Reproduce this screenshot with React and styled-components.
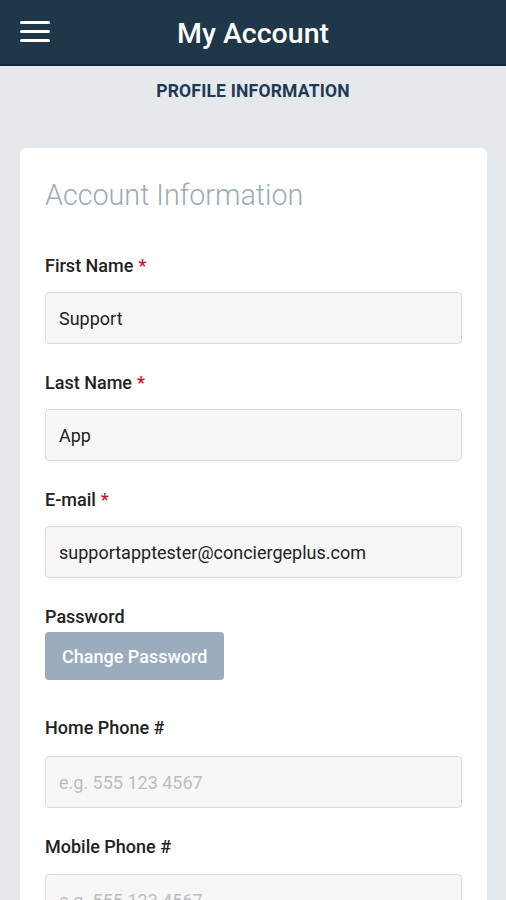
import React from "react";
import styled, { createGlobalStyle } from "styled-components";

const GlobalStyle = createGlobalStyle`
  * { box-sizing: border-box; }
  body {
    margin: 0;
    background: #e6e9ec;
    font-family: Roboto, "Noto Sans", Arial, sans-serif;
  }
`;

const Page = styled.div`
  min-height: 900px;
  background: #e6e9ec;
`;

const Header = styled.header`
  height: 66px;
  background: #1e3749;
  border-bottom: 2px solid #16293a;
  display: flex;
  align-items: center;
  position: relative;
  justify-content: center;
`;

const MenuButton = styled.button`
  position: absolute;
  left: 20px;
  top: 21px;
  width: 30px;
  height: 21px;
  padding: 0;
  border: none;
  background: none;
  display: flex;
  flex-direction: column;
  justify-content: space-between;
  span {
    display: block;
    height: 3px;
    border-radius: 2px;
    background: #fff;
  }
`;

const Title = styled.h1`
  margin: 0;
  color: #fff;
  font-size: 28.5px;
  font-weight: 500;
  padding-top: 2px;
`;

const SectionTitle = styled.div`
  text-align: center;
  color: #1e3a55;
  font-size: 17.5px;
  font-weight: 700;
  letter-spacing: 0.2px;
  padding-top: 14px;
  line-height: 22px;
`;

const Card = styled.div`
  margin: 46px 19px 0 20px;
  background: #fff;
  border-radius: 6px;
  padding: 30px 25px 0 25px;
`;

const CardTitle = styled.h2`
  margin: 0 0 44px;
  font-size: 28.7px;
  font-weight: 300;
  color: #9aabba;
  line-height: 34px;
`;

const Field = styled.div`
  margin-bottom: ${(p) => p.$gap || 29}px;
`;

const Label = styled.div`
  font-size: 18px;
  font-weight: 500;
  color: #222;
  line-height: 20px;
  margin-bottom: ${(p) => p.$gap || 16}px;
`;

const Required = styled.span`
  color: #c8102e;
  margin-left: 5px;
`;

const Input = styled.input`
  display: block;
  width: 100%;
  height: 52px;
  padding: 0 13px;
  background: #f7f7f7;
  border: 1px solid #dcdcdc;
  border-radius: 4px;
  font-family: inherit;
  font-size: 18px;
  color: #222;
  outline: none;
  &::placeholder {
    color: #bdbdbd;
  }
`;

const Button = styled.button`
  height: 48px;
  padding: 0 17px;
  border: none;
  border-radius: 4px;
  background: #9aacbd;
  color: #fff;
  font-family: inherit;
  font-size: 18px;
  font-weight: 500;
`;

const fields = [
  { label: "First Name", required: true, value: "Support" },
  { label: "Last Name", required: true, value: "App" },
  { label: "E-mail", required: true, value: "supportapptester@conciergeplus.com" },
];

export default function App() {
  return (
    <Page>
      <GlobalStyle />
      <Header>
        <MenuButton aria-label="menu">
          <span />
          <span />
          <span />
        </MenuButton>
        <Title>My Account</Title>
      </Header>
      <SectionTitle>PROFILE INFORMATION</SectionTitle>
      <Card>
        <CardTitle>Account Information</CardTitle>
        {fields.map((f) => (
          <Field key={f.label}>
            <Label>
              {f.label}
              {f.required && <Required>*</Required>}
            </Label>
            <Input defaultValue={f.value} readOnly />
          </Field>
        ))}
        <Field $gap={38}>
          <Label $gap={5}>Password</Label>
          <Button>Change Password</Button>
        </Field>
        <Field>
          <Label $gap={18}>Home Phone #</Label>
          <Input placeholder="e.g. 555 123 4567" />
        </Field>
        <Field>
          <Label $gap={17}>Mobile Phone #</Label>
          <Input placeholder="e.g. 555 123 4567" />
        </Field>
      </Card>
    </Page>
  );
}
